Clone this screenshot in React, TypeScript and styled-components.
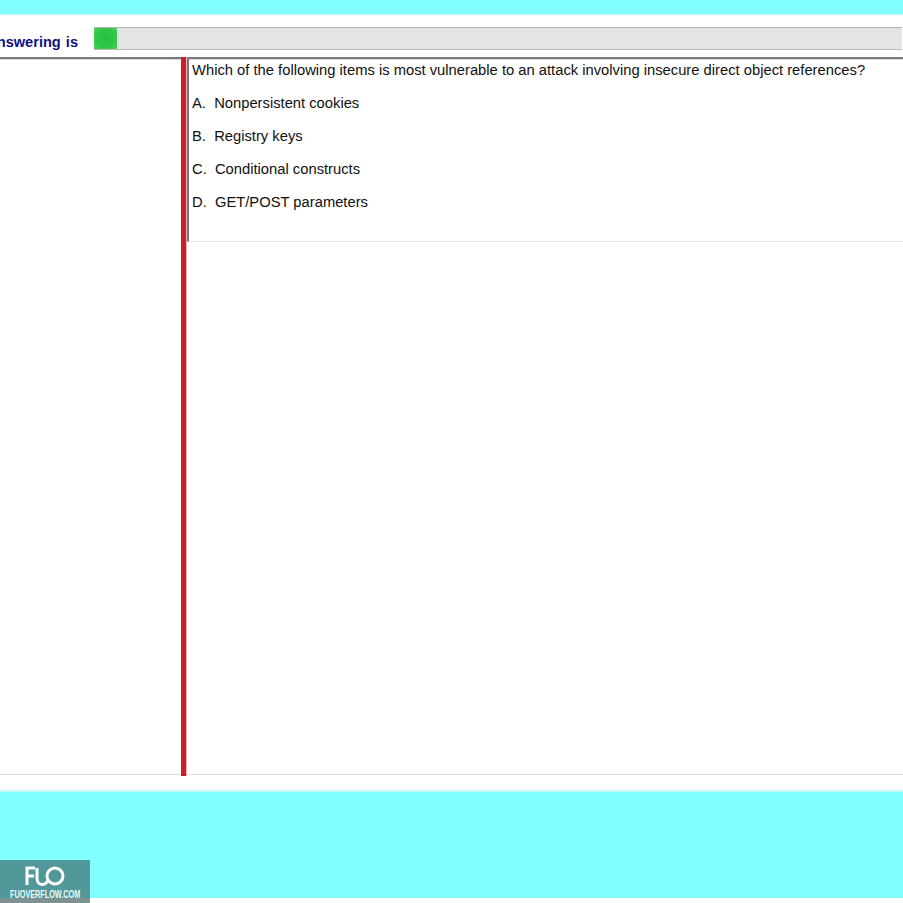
import React from "react";
import styled, { createGlobalStyle } from "styled-components";

const Global = createGlobalStyle`
  html, body { margin: 0; padding: 0; background: #fff; }
  body { font-family: "Liberation Sans", Arial, sans-serif; }
`;
const Page = styled.div`
  position: relative;
  width: 903px;
  height: 903px;
  overflow: hidden;
  display: flex;
  flex-direction: column;
  background: #fff;
`;
const CyanTop = styled.div`
  height: 14px;
  flex: none;
  background: #82ffff;
  border-bottom: 1px solid #c4f6f6;
`;
const Header = styled.div`
  height: 42px;
  flex: none;
  display: flex;
  align-items: flex-start;
  padding-top: 12px;
  box-sizing: border-box;
`;
const Label = styled.div`
  width: 78px;
  height: 23px;
  flex: none;
  margin-right: 16px;
  display: flex;
  justify-content: flex-end;
  align-items: center;
  overflow: hidden;
  white-space: nowrap;
  color: #10107e;
  font-weight: 700;
  font-size: 14.6px;
  word-spacing: 1px;
  padding-top: 7px;
  box-sizing: border-box;
`;
const Track = styled.div`
  width: 808px;
  height: 23px;
  flex: none;
  box-sizing: border-box;
  background: #e4e4e4;
  border-top: 1px solid #b4b4b4;
  border-bottom: 1px solid #b8b8b8;
`;
const Fill = styled.div`
  height: 100%;
  background: radial-gradient(ellipse at center, #22c43c 0%, #2fc748 60%, #52cf62 100%);
`;
const Rule = styled.div`
  height: 2px;
  flex: none;
  background: #7c7c7c;
  border-bottom: 1px solid #d8d8d8;
`;
const Body = styled.div`
  height: 715px;
  flex: none;
  display: flex;
`;
const LeftPane = styled.div`
  width: 181px;
  flex: none;
  box-sizing: border-box;
  border-bottom: 1px solid #e0e0e0;
`;
const Splitter = styled.div`
  width: 6px;
  flex: none;
  height: 719px;
  margin-top: -3px;
  background: #cc1f27;
  border-right: 1px solid #e4b8b8;
  box-sizing: border-box;
`;
const RightPane = styled.div`
  flex: 1;
  min-width: 0;
  border-bottom: 1px solid #e0e0e0;
`;
const QuestionBox = styled.div`
  height: 183px;
  margin-top: -1px;
  box-sizing: border-box;
  border-left: 2px solid #7a7474;
  border-bottom: 1px solid #e6e6e6;
  padding: 3px 0 0 3px;
  display: flex;
  flex-direction: column;
  gap: 16px;
`;
const Line = styled.div`
  font-size: 14.75px;
  line-height: 17px;
  color: #111;
  white-space: pre;
`;
const Spacer = styled.div`
  height: 15px;
  flex: none;
`;
const CyanBottom = styled.div`
  height: 108px;
  flex: none;
  background: #82ffff;
  border-top: 2px solid #c4f6f6;
  box-sizing: border-box;
`;
const Watermark = styled.div`
  position: absolute;
  left: 0;
  bottom: 0;
  width: 90px;
  height: 43px;
  background: linear-gradient(#50989a 0 38px, #7f9090 38px);
  display: flex;
  flex-direction: column;
  align-items: center;
  padding-top: 6px;
  box-sizing: border-box;
`;
const WatermarkText = styled.div`
  margin-top: 3px;
  color: #f2f8f8;
  font-family: "Liberation Sans", Arial, sans-serif;
  font-weight: 700;
  font-size: 11px;
  line-height: 11px;
  transform: scaleX(0.66);
  white-space: nowrap;
`;

const options = ["A.  Nonpersistent cookies", "B.  Registry keys", "C.  Conditional constructs", "D.  GET/POST parameters"];

export default function App() {
  return (
    <Page>
      <Global />
      <CyanTop />
      <Header>
        <Label>Answering is</Label>
        <Track>
          <Fill style={{ width: `${(23 / 808) * 100}%` }} />
        </Track>
      </Header>
      <Rule />
      <Body>
        <LeftPane />
        <Splitter />
        <RightPane>
          <QuestionBox>
            <Line>Which of the following items is most vulnerable to an attack involving insecure direct object references?</Line>
            {options.map((o) => (
              <Line key={o}>{o}</Line>
            ))}
          </QuestionBox>
        </RightPane>
      </Body>
      <Spacer />
      <CyanBottom />
      <Watermark>
        <svg width="40" height="20" viewBox="0 0 40 20" fill="none" stroke="#fff" strokeWidth="3">
          <path d="M2 19V2H10M2 10H9" />
          <path d="M12 2V12.5C12 16.5 14.5 18.5 17.5 18.5C20.5 18.5 22 16.5 23 14" />
          <circle cx="30" cy="10" r="8" />
        </svg>
        <WatermarkText>FUOVERFLOW.COM</WatermarkText>
      </Watermark>
    </Page>
  );
}
